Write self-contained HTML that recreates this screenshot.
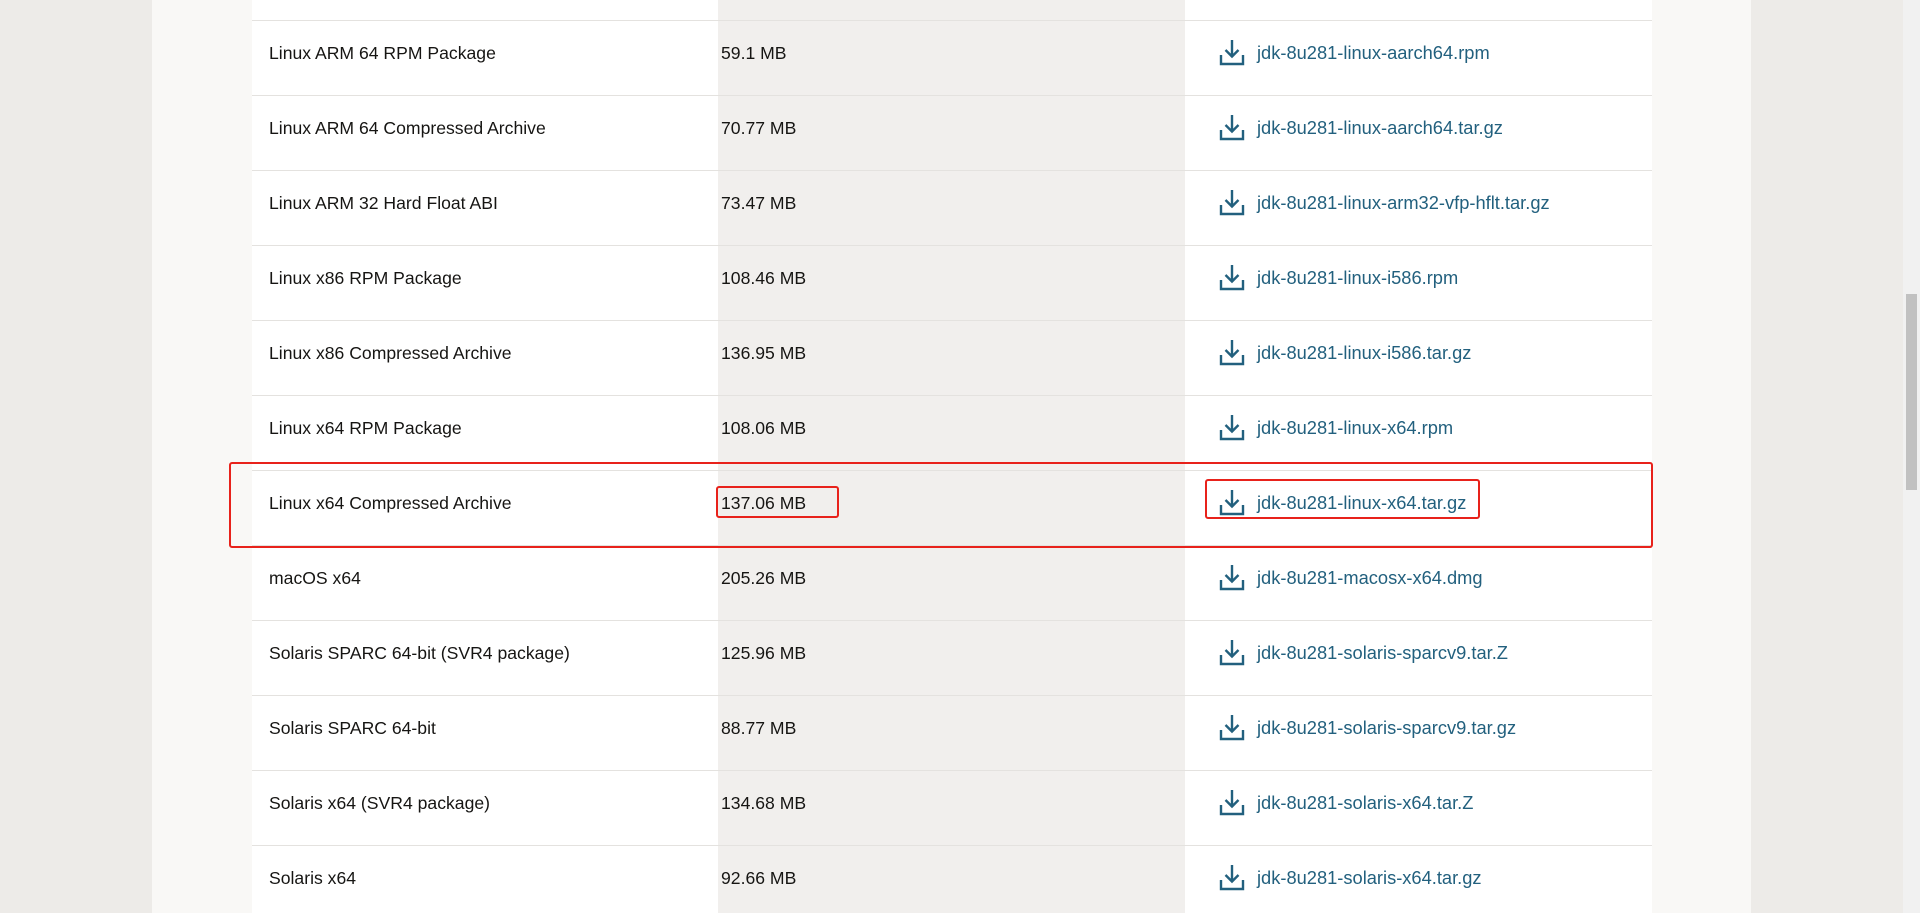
<!DOCTYPE html>
<html><head><meta charset="utf-8"><style>
*{margin:0;padding:0;box-sizing:border-box}
body{width:1920px;height:913px;overflow:hidden;background:#edebe8;font-family:"Liberation Sans",sans-serif;position:relative}
.panel{position:absolute;left:152px;top:0;width:1599px;height:913px;background:#f9f8f6}
.table{position:absolute;left:252px;top:0;width:1400px;height:913px;background:#fff}
.col2{position:absolute;left:718px;top:0;width:467px;height:913px;background:#f1efed}
.line{position:absolute;left:252px;width:1400px;height:1px;background:#e4e2df}
.t{position:absolute;font-size:17.6px;color:#161513;line-height:22px;white-space:nowrap}
.l{color:#22607e;font-size:18.3px}
svg.i{position:absolute}
.red{position:absolute;border:2.5px solid #e8221b;border-radius:3px}
.sb{position:absolute;left:1903px;top:0;width:17px;height:913px;background:#f1f1f1}
.th{position:absolute;left:1906px;top:294px;width:11px;height:196px;background:#c1c1c1}
</style></head><body>
<div class="panel"></div><div class="table"></div><div class="col2"></div>
<div id="rows"></div>
<div class="red" style="left:229px;top:462px;width:1424px;height:86px"></div>
<div class="red" style="left:716px;top:486px;width:123px;height:32px"></div>
<div class="red" style="left:1205px;top:479px;width:275px;height:40px"></div>
<div class="sb"></div><div class="th"></div>
<script>
const d=[["Linux ARM 64 RPM Package","59.1 MB","jdk-8u281-linux-aarch64.rpm"],
["Linux ARM 64 Compressed Archive","70.77 MB","jdk-8u281-linux-aarch64.tar.gz"],
["Linux ARM 32 Hard Float ABI","73.47 MB","jdk-8u281-linux-arm32-vfp-hflt.tar.gz"],
["Linux x86 RPM Package","108.46 MB","jdk-8u281-linux-i586.rpm"],
["Linux x86 Compressed Archive","136.95 MB","jdk-8u281-linux-i586.tar.gz"],
["Linux x64 RPM Package","108.06 MB","jdk-8u281-linux-x64.rpm"],
["Linux x64 Compressed Archive","137.06 MB","jdk-8u281-linux-x64.tar.gz"],
["macOS x64","205.26 MB","jdk-8u281-macosx-x64.dmg"],
["Solaris SPARC 64-bit (SVR4 package)","125.96 MB","jdk-8u281-solaris-sparcv9.tar.Z"],
["Solaris SPARC 64-bit","88.77 MB","jdk-8u281-solaris-sparcv9.tar.gz"],
["Solaris x64 (SVR4 package)","134.68 MB","jdk-8u281-solaris-x64.tar.Z"],
["Solaris x64","92.66 MB","jdk-8u281-solaris-x64.tar.gz"]];
let h='';
d.forEach((r,i)=>{const top=21+i*75;const c=top+32;
h+=`<div class="line" style="top:${top-1}px"></div>`;
h+=`<div class="t" style="left:269px;top:${c-11}px">${r[0]}</div>`;
h+=`<div class="t" style="left:721px;top:${c-11}px">${r[1]}</div>`;
h+=`<svg class="i" style="left:1219px;top:${c-15}px" width="26" height="28" viewBox="0 0 26 28" fill="none" stroke="#22607e" stroke-width="2.4"><path d="M13 2v16M6.5 12l6.5 6.5 6.5-6.5M2 17v9h22v-9"/></svg>`;
h+=`<div class="t l" style="left:1257px;top:${c-11}px">${r[2]}</div>`;});
document.getElementById('rows').innerHTML=h;
</script>
</body></html>
